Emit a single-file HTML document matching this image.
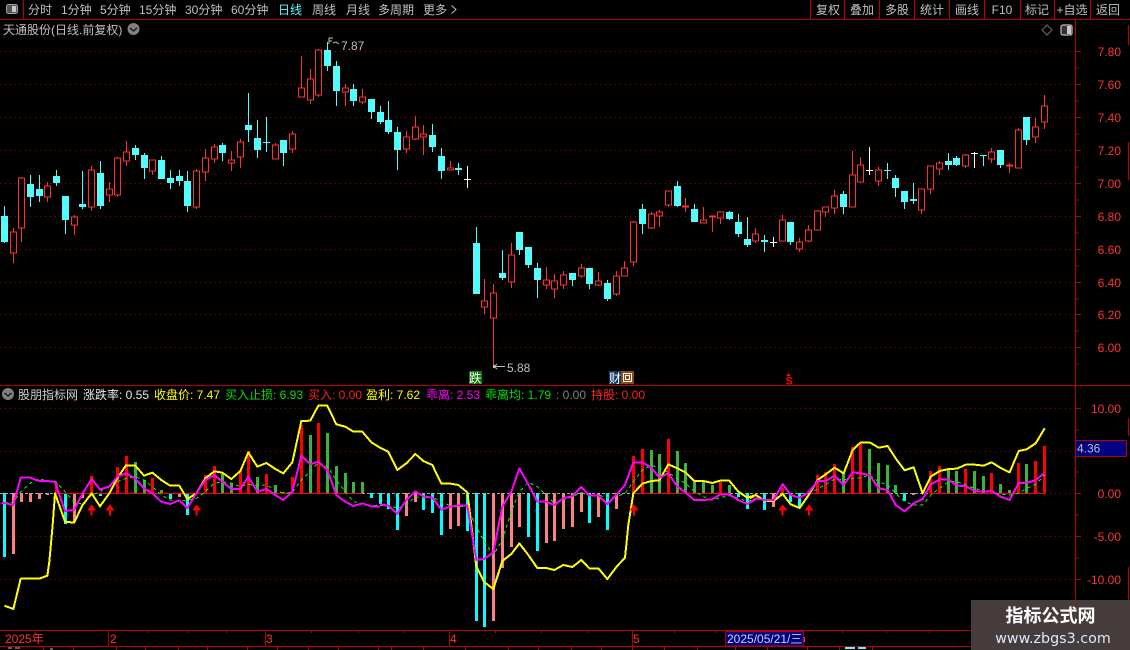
<!DOCTYPE html>
<html lang="zh">
<head>
<meta charset="utf-8">
<title>天通股份</title>
<style>
html,body{margin:0;padding:0;background:#000;width:1130px;height:650px;overflow:hidden}
svg{position:absolute;left:0;top:0;display:block}
text{font-family:"Liberation Sans","Noto Sans CJK SC",sans-serif;font-size:12px}
.t{fill:#c0c0c0}
.a{fill:#ff3232}
</style>
</head>
<body>
<svg width="1130" height="650" viewBox="0 0 1130 650" xmlns="http://www.w3.org/2000/svg">
<rect width="1130" height="650" fill="#000"/>

<!-- grid -->
<path shape-rendering="crispEdges" stroke="#a00000" stroke-dasharray="1 4" fill="none" d="M0 51.5H1075M0 84.5H1075M0 117.5H1075M0 150.5H1075M0 183.5H1075M0 216.5H1075M0 249.5H1075M0 282.5H1075M0 314.5H1075M0 347.5H1075M0 408.5H1075M0 451.5H1075M0 536.5H1075M0 579.5H1075M1045 493.5H1075"/>

<!-- frame -->
<path shape-rendering="crispEdges" stroke="#b80000" fill="none" d="M0 19.5H1130M23.5 0V19M810.5 0V19M844.5 0V19M879.5 0V19M914.5 0V19M949.5 0V19M984.5 0V19M1020.5 0V19M1054.5 0V19M1090.5 0V19M0 385.5H1130M0 630.5H971M0 646.5H971M1075.5 19V600M1128.5 25V45M1128.5 142V180M1128.5 418V436M1128.5 567V600
M1076 51.5H1081M1076 84.5H1081M1076 117.5H1081M1076 150.5H1081M1076 183.5H1081M1076 216.5H1081M1076 249.5H1081M1076 282.5H1081M1076 314.5H1081M1076 347.5H1081M1076 68H1079M1076 101H1079M1076 134H1079M1076 167H1079M1076 200H1079M1076 233H1079M1076 266H1079M1076 299H1079M1076 331H1079M1076 364H1079
M1076 408.5H1081M1076 451.5H1081M1076 493.5H1081M1076 536.5H1081M1076 579.5H1081M1076 430H1079M1076 472H1079M1076 515H1079M1076 558H1079
M108.5 630V646M265.5 630V646M449.5 630V646M632.5 630V646
M147.5 630V633M187.5 630V633M226.5 630V633M311.5 630V633M358.5 630V633M403.5 630V633M495.5 630V633M541.5 630V633M587.5 630V633M674.5 630V633M715.5 630V633M842.5 630V633M886.5 630V633M929.5 630V633
M43.5 646V650M73.5 646V650M116.5 646V650M145.5 646V650M178.5 646V650M207.5 646V650M247.5 646V650M277.5 646V650M308.5 646V650M338.5 646V650M378.5 646V650M391.5 646V650M423.5 646V650M465.5 646V650M508.5 646V650M538.5 646V650M571.5 646V650M601.5 646V650M632.5 646V650M664.5 646V650M697.5 646V650M735.5 646V650M767.5 646V650M807.5 646V650M839.5 646V650M872.5 646V650"/>

<!-- toolbar -->
<rect x="6.5" y="4.5" width="11" height="9" rx="2" fill="#555" stroke="#a0a0a0"/>
<rect x="12" y="6" width="4" height="6" fill="#c8c8c8"/>
<text class="t" x="28" y="14">分时</text>
<text class="t" x="61" y="14">1分钟</text>
<text class="t" x="100" y="14">5分钟</text>
<text class="t" x="139" y="14">15分钟</text>
<text class="t" x="185" y="14">30分钟</text>
<text class="t" x="231" y="14">60分钟</text>
<text x="278" y="14" fill="#54fcfc">日线</text>
<text class="t" x="312" y="14">周线</text>
<text class="t" x="346" y="14">月线</text>
<text class="t" x="378" y="14">多周期</text>
<text class="t" x="423" y="14">更多</text>
<path d="M451.5 5.5L456 9.5L451.5 13.5" fill="none" stroke="#c0c0c0"/>
<g text-anchor="middle">
<text class="t" x="828" y="14">复权</text>
<text class="t" x="862" y="14">叠加</text>
<text class="t" x="897" y="14">多股</text>
<text class="t" x="932" y="14">统计</text>
<text class="t" x="967" y="14">画线</text>
<text class="t" x="1002" y="14">F10</text>
<text class="t" x="1037" y="14">标记</text>
<text class="t" x="1072" y="14">+自选</text>
<text class="t" x="1108" y="14">返回</text>
</g>

<!-- title -->
<text class="t" x="3" y="34">天通股份(日线.前复权)</text>
<circle cx="133.500" cy="29" r="6" fill="#808080"/>
<path d="M130 28L133.500 31L137 28" fill="none" stroke="#222" stroke-width="1.500"/>
<path d="M1047 25L1052 30L1047 35L1042 30Z" fill="none" stroke="#707070"/>
<rect x="1061" y="25" width="11" height="10" rx="2" fill="#333" stroke="#a0a0a0" stroke-width="1.500"/>
<rect x="1067" y="26" width="4" height="8" fill="#c8c8c8"/>

<!-- candle wicks/body -->
<g shape-rendering="crispEdges">
<path fill="none" stroke="#ff3232" d="M10.5 232h6v21h-6zM13.5 228V232M13.5 253V263M18.5 178h6v50h-6zM21.5 177V178M21.5 228V242M44.5 186h6v11h-6zM47.5 182V186M47.5 197V202M71.5 217h6v8h-6zM74.5 215V217M74.5 225V235M88.5 170h6v37h-6zM91.5 166V170M91.5 207V211M106.5 189h6v6h-6zM109.5 182V189M109.5 195V202M114.5 158h6v37h-6zM117.5 157V158M117.5 195V197M123.5 152h6v9h-6zM126.5 141V152M126.5 161V166M149.5 160h6v11h-6zM152.5 171V175M193.5 171h6v36h-6zM196.5 169V171M196.5 207V209M202.5 158h6v14h-6zM205.5 149V158M205.5 172V181M211.5 147h6v12h-6zM214.5 144V147M214.5 159V163M228.5 160h6v3h-6zM231.5 151V160M231.5 163V171M237.5 142h6v15h-6zM240.5 139V142M240.5 157V168M272.5 145h6v14h-6zM275.5 143V145M289.5 134h6v15h-6zM292.5 131V134M292.5 149V153M298.5 88h6v9h-6zM301.5 56V88M307.5 79h6v21h-6zM310.5 69V79M310.5 100V104M315.5 50h6v45h-6zM318.5 49V50M318.5 95V97M342.5 88h6v4h-6zM345.5 84V88M345.5 92V106M359.5 97h6v5h-6zM362.5 89V97M362.5 102V104M403.5 137h6v12h-6zM406.5 131V137M406.5 149V153M412.5 127h6v12h-6zM415.5 116V127M415.5 139V140M420.5 134h6v3h-6zM423.5 125V134M423.5 137V155M447.5 168h6v2h-6zM450.5 161V168M481.5 301h6v6h-6zM484.5 279V301M484.5 307V314M490.5 293h6v25h-6zM493.5 284V293M493.5 318V366M508.5 255h6v27h-6zM511.5 243V255M511.5 282V288M543.5 280h6v5h-6zM546.5 267V280M546.5 285V289M551.5 281h6v8h-6zM554.5 274V281M554.5 289V298M560.5 275h6v10h-6zM563.5 271V275M563.5 285V289M578.5 268h6v8h-6zM581.5 264V268M581.5 276V278M595.5 281h6v4h-6zM598.5 272V281M598.5 285V286M613.5 276h6v18h-6zM616.5 271V276M616.5 294V296M621.5 268h6v8h-6zM624.5 261V268M630.5 222h6v40h-6zM633.5 221V222M633.5 262V266M648.5 214h6v14h-6zM651.5 212V214M651.5 228V229M656.5 212h6v4h-6zM659.5 210V212M659.5 216V227M665.5 191h6v14h-6zM668.5 205V207M682.5 206h6v1h-6zM685.5 198V206M685.5 207V212M700.5 220h6v3h-6zM703.5 207V220M709.5 216h6v1h-6zM712.5 217V232M717.5 212h6v6h-6zM720.5 218V224M752.5 234h6v7h-6zM755.5 228V234M755.5 241V243M779.5 220h6v21h-6zM782.5 215V220M796.5 242h6v7h-6zM799.5 238V242M799.5 249V252M805.5 230h6v11h-6zM808.5 225V230M808.5 241V242M814.5 211h6v19h-6zM817.5 210V211M822.5 207h6v5h-6zM825.5 212V217M831.5 196h6v12h-6zM834.5 190V196M834.5 208V214M849.5 175h6v32h-6zM852.5 151V175M857.5 165h6v17h-6zM860.5 157V165M875.5 170h6v11h-6zM878.5 167V170M878.5 181V186M918.5 189h6v21h-6zM921.5 210V214M927.5 166h6v23h-6zM930.5 189V194M936.5 163h6v6h-6zM939.5 161V163M939.5 169V175M962.5 155h6v11h-6zM965.5 154V155M965.5 166V168M988.5 152h6v7h-6zM991.5 148V152M991.5 159V163M1006.5 165h6v1h-6zM1009.5 163V165M1009.5 166V173M1015.5 130h6v38h-6zM1018.5 128V130M1032.5 127h6v10h-6zM1035.5 118V127M1035.5 137V143M1041.5 106h6v16h-6zM1044.5 95V106M1044.5 122V129"/>
<path fill="none" stroke="#54fcfc" d="M4.5 206V243M30.5 175V207M39.5 175V202M56.5 170V186M65.5 196V234M82.5 171V209M100.5 161V209M135.5 145V160M144.5 153V179M161.5 156V179M170.5 170V189M179.5 170V186M187.5 171V212M222.5 143V161M248.5 93V142M257.5 120V158M266.5 117V152M283.5 140V166M327.5 42V71M336.5 61V106M353.5 84V106M371.5 99V119M380.5 106V124M388.5 101V134M397.5 127V170M432.5 124V152M441.5 148V179M458.5 163V175M476.5 227V294M502.5 250V280M519.5 232V255M528.5 247V268M537.5 263V298M572.5 273V286M589.5 268V289M607.5 280V301M642.5 204V234M677.5 181V207M694.5 204V222M729.5 211V220M738.5 214V237M747.5 217V247M764.5 235V252M790.5 222V245M843.5 191V214M887.5 163V179M895.5 175V197M904.5 191V209M913.5 183V204M948.5 153V170M956.5 156V166M983.5 155V166M1000.5 150V168M1026.5 117V145"/>
<path fill="#54fcfc" d="M1 216h7v26h-7zM27 184h7v13h-7zM36 189h7v7h-7zM53 176h7v7h-7zM62 196h7v24h-7zM79 204h7v3h-7zM97 173h7v33h-7zM132 148h7v7h-7zM141 155h7v13h-7zM158 160h7v19h-7zM167 178h7v5h-7zM176 176h7v5h-7zM184 181h7v25h-7zM219 145h7v8h-7zM245 125h7v5h-7zM254 138h7v12h-7zM263 142h7v1h-7zM280 140h7v13h-7zM324 50h7v16h-7zM333 66h7v25h-7zM350 89h7v12h-7zM368 99h7v13h-7zM377 112h7v10h-7zM385 120h7v12h-7zM394 132h7v18h-7zM429 135h7v12h-7zM438 156h7v15h-7zM455 168h7v2h-7zM473 243h7v51h-7zM499 273h7v5h-7zM516 232h7v18h-7zM525 247h7v18h-7zM534 268h7v12h-7zM569 273h7v7h-7zM586 268h7v16h-7zM604 283h7v16h-7zM639 209h7v15h-7zM674 186h7v20h-7zM691 209h7v13h-7zM726 212h7v7h-7zM735 222h7v12h-7zM744 239h7v6h-7zM761 240h7v2h-7zM787 222h7v20h-7zM840 194h7v13h-7zM884 170h7v1h-7zM892 178h7v10h-7zM901 191h7v11h-7zM910 199h7v2h-7zM945 161h7v4h-7zM953 158h7v7h-7zM980 155h7v1h-7zM997 150h7v15h-7zM1023 117h7v23h-7z"/>
<path fill="none" stroke="#ffffff" d="M467.5 166V188M464 179.500H471M773.5 237V247M770 242.500H777M869.5 147V175M866 170.500H873M974.5 152V168M971 153.500H978"/>
</g>

<!-- high / low tags -->
<path d="M329 37.500V44M329 38H333M329 41H332M333 43L336 42L339 44" fill="none" stroke="#c0c0c0"/>
<text class="t" x="341" y="50">7.87</text>
<path d="M494 366.500H505M497 364L494 366.500L497 369" fill="none" stroke="#c0c0c0"/>
<rect x="493" y="365" width="2" height="3" fill="#c0c0c0"/>
<text class="t" x="507" y="372">5.88</text>
<rect x="469" y="371" width="13" height="13" fill="#0a7a0a"/>
<text x="469" y="382.500" fill="#fff" style="font-size:12.500px">跌</text>
<rect x="609" y="371" width="12" height="13" fill="#0e3a66"/>
<text x="609" y="382.500" fill="#fff" style="font-size:12px">财</text>
<rect x="621" y="371" width="13" height="13" fill="#8a4a12"/>
<path d="M623.500 373.500h8v8h-8zM625.500 375.500h4v4h-4z" fill="none" stroke="#fff" shape-rendering="crispEdges"/>
<path d="M786 376L788.500 373L791 376Z" fill="#ff0000"/>
<text x="785.500" y="384.500" fill="#ff0000" style="font-size:11px;font-weight:bold">S</text>

<!-- upper axis labels -->
<g class="a" text-anchor="end">
<text class="a" x="1121" y="56">7.80</text>
<text class="a" x="1121" y="89">7.60</text>
<text class="a" x="1121" y="122">7.40</text>
<text class="a" x="1121" y="155">7.20</text>
<text class="a" x="1121" y="188">7.00</text>
<text class="a" x="1121" y="221">6.80</text>
<text class="a" x="1121" y="254">6.60</text>
<text class="a" x="1121" y="287">6.40</text>
<text class="a" x="1121" y="319">6.20</text>
<text class="a" x="1121" y="352">6.00</text>
<text class="a" x="1121" y="413">10.00</text>
<text class="a" x="1121" y="498">0.00</text>
<text class="a" x="1121" y="541">-5.00</text>
<text class="a" x="1121" y="584">-10.00</text>
</g>
<rect x="1076" y="440" width="51" height="16" fill="#000080"/>
<path d="M1076 440.500H1127M1076 456.500H1127M1126.500 440V456" stroke="#b80000" fill="none" shape-rendering="crispEdges"/>
<text x="1077" y="452.500" fill="#c0c0c0">4.36</text>

<!-- indicator title -->
<circle cx="8" cy="394" r="6" fill="#808080"/>
<path d="M4.500 393L8 396L11.500 393" fill="none" stroke="#222" stroke-width="1.500"/>
<text x="18" y="399" fill="#d0d0d0">股朋指标网</text>
<text x="83" y="399" fill="#e8e8e8">涨跌率: 0.55</text>
<text x="154" y="399" fill="#ffff00">收盘价: 7.47</text>
<text x="225" y="399" fill="#00e000">买入止损: 6.93</text>
<text x="308" y="399" fill="#ff2020">买入: 0.00</text>
<text x="366" y="399" fill="#ffff00">盈利: 7.62</text>
<text x="426" y="399" fill="#ff00ff">乖离: 2.53</text>
<text x="485" y="399" fill="#00e000">乖离均: 1.79</text>
<text x="556" y="399" fill="#808080">: 0.00</text>
<text x="591" y="399" fill="#ff2020">持股: 0.00</text>

<!-- bars -->
<g shape-rendering="crispEdges" stroke-width="3" fill="none">
<path stroke="#00ffff" d="M4.500 493V557M65.500 493V524M100.500 493V496M170.500 493V499M187.500 493V515M371.500 493V498M380.500 493V504M388.500 493V509M397.500 493V530M423.500 493V510M432.500 493V513M441.500 493V535M467.500 493V531M476.500 493V621M484.500 493V627M528.500 493V537M537.500 493V551M589.500 493V523M607.500 493V530M738.500 493V497M747.500 493V509M764.500 493V510M790.500 493V502M799.500 493V507M904.500 493V501"/>
<path stroke="#ff8080" d="M13.500 493V554M21.500 493V502M30.500 493V502M39.500 493V499M47.500 493V495M74.500 493V522M82.500 493V498M179.500 493V497M406.500 493V516M415.500 493V502M450.500 493V529M458.500 493V526M493.500 493V621M502.500 493V568M511.500 493V547M519.500 493V527M546.500 493V543M554.500 493V541M563.500 493V529M572.500 493V527M581.500 493V512M598.500 493V517M616.500 493V509M773.500 493V507M913.500 493V495"/>
<path stroke="#ff0000" d="M56.500 493V483M91.500 493V476M117.500 493V467M126.500 493V456M152.500 493V478M205.500 493V475M214.500 493V466M240.500 493V470M248.500 493V451M266.500 493V474M292.500 493V477M301.500 493V425M318.500 493V423M633.500 493V456M642.500 493V449M668.500 493V439M720.500 493V482M782.500 493V488M817.500 493V475M825.500 493V472M834.500 493V464M852.500 493V447M860.500 493V444M930.500 493V471M939.500 493V466M965.500 493V469M991.500 493V473M1018.500 493V463M1035.500 493V461M1044.500 493V446"/>
<path stroke="#3cb33c" d="M135.500 493V462M144.500 493V480M161.500 493V490M222.500 493V474M231.500 493V483M257.500 493V477M275.500 493V485M283.500 493V492M310.500 493V435M327.500 493V433M336.500 493V466M345.500 493V473M353.500 493V482M362.500 493V482M651.500 493V450M659.500 493V454M677.500 493V451M685.500 493V463M694.500 493V482M703.500 493V482M712.500 493V485M729.500 493V485M843.500 493V473M869.500 493V449M878.500 493V463M887.500 493V465M895.500 493V485M948.500 493V469M956.500 493V471M974.500 493V471M983.500 493V476M1000.500 493V484M1009.500 493V490M1026.500 493V464"/>
</g>
<path shape-rendering="crispEdges" fill="none" stroke="#a8a8a8" stroke-dasharray="3 2" d="M0 493.500H55M362 493.500H633M730 493.500H808M890 493.500H930"/>
<path shape-rendering="crispEdges" fill="none" stroke="#ff0000" d="M55 493.500H362M633 493.500H730M808 493.500H890M930 493.500H1045"/>

<!-- lines -->
<g transform="translate(0 385) scale(.33333)" fill="none" stroke-linejoin="round" shape-rendering="crispEdges">
<polyline stroke="#00ff00" stroke-width="3" stroke-dasharray="10 10" points="13,353 40,352 62,320 90,295 118,282 142,288 165,288 195,320 222,350 248,358 275,330 300,320 328,300 352,290 378,280 405,275 432,285 457,305 484,330 510,345 538,350 562,345 589,340 616,320 643,295 667,290 694,295 721,305 745,298 772,302 799,300 826,315 850,325 877,322 904,285 931,258 955,232 982,245 1009,285 1036,320 1060,350 1087,355 1114,362 1140,360"/>
<polyline stroke="#ffff00" stroke-width="6" points="13,662 40,672 62,581 118,581 142,572 148,530 158,420 165,325 195,410 222,413 248,360 275,325 300,364 328,325 352,280 378,241 405,241 432,272 457,263 484,285 510,302 538,302 562,342 589,325 616,280 643,259 667,263 694,282 721,258 745,202 772,245 799,234 826,252 850,265 877,232 904,108 931,107 955,62 982,62 1009,118 1036,125 1060,140 1087,140 1114,172 1140,188"/>
<polyline stroke="#ff00ff" stroke-width="6" points="4,354 13,354 40,360 62,278 90,278 118,288 142,288 165,291 195,378 222,375 248,325 275,282 300,313 328,305 352,275 378,265 405,280 432,310 457,325 484,350 510,357 538,346 562,369 589,325 616,285 643,270 667,290 694,312 721,312 745,275 772,320 799,312 826,330 850,345 877,320 904,212 931,238 955,230 982,255 1009,330 1036,350 1060,363 1087,355 1114,364 1140,364"/>
<path fill="#ff0000" stroke="none" d="M275 358L289 377H278V392H272V377H261ZM330 358L344 377H333V392H327V377H316ZM590 358L604 377H593V392H587V377H576Z"/>
</g>
<g transform="translate(380 385) scale(.33333)" fill="none" stroke-linejoin="round" shape-rendering="crispEdges">
<polyline stroke="#00ff00" stroke-width="3" stroke-dasharray="10 10" points="0,362 25,360 52,370 79,360 106,335 130,340 157,335 184,352 211,362 235,365 262,365 289,425 313,470 340,510 367,465 394,380 418,320 445,292 472,305 499,330 523,355 550,345 577,335 604,322 628,332 655,330 682,338 709,335 735,325 760,290 787,255 814,240 838,250 865,262 892,282 916,295 943,318 970,335 997,345 1021,338 1048,332 1075,340 1102,348 1128,345"/>
<polyline stroke="#ffff00" stroke-width="6" points="0,188 25,200 52,255 79,235 106,207 130,228 157,240 184,296 211,296 235,300 262,322 265,345 289,545 313,592 340,612 367,528 394,507 418,475 445,510 472,549 499,549 523,555 550,540 577,546 604,525 628,550 655,550 682,582 709,546 735,518 745,420 760,325 787,296 814,288 838,286 865,238 892,250 916,262 943,288 970,288 997,294 1021,287 1048,287 1075,320 1102,338 1128,330"/>
<polyline stroke="#ff00ff" stroke-width="6" points="0,358 25,362 52,386 79,345 106,319 130,334 157,338 184,374 211,365 235,362 262,362 289,525 313,522 340,502 367,365 394,320 418,250 445,298 472,350 499,350 523,360 550,340 577,333 604,306 628,332 655,332 682,357 709,330 735,300 760,232 787,232 814,248 838,278 865,265 892,305 916,322 943,345 970,345 997,343 1021,328 1048,328 1075,345 1102,357 1128,342"/>
<path fill="#ff0000" stroke="none" d="M762 358L776 377H765V392H759V377H748Z"/>
</g>
<g transform="translate(750 385) scale(.33333)" fill="none" stroke-linejoin="round" shape-rendering="crispEdges">
<polyline stroke="#00ff00" stroke-width="3" stroke-dasharray="10 10" points="0,350 17,342 44,345 71,342 98,328 122,325 149,325 176,325 203,312 227,298 254,282 281,285 308,280 332,278 359,270 386,290 413,300 437,325 464,350 491,360 518,360 542,330 569,310 596,290 620,290 647,300 674,310 701,318 725,320 752,328 779,330 806,325 830,310 857,298 884,270"/>
<polyline stroke="#ffff00" stroke-width="6" points="0,340 17,330 44,347 71,348 98,327 122,358 149,369 176,330 203,285 227,268 254,248 281,265 308,195 332,172 359,172 386,188 413,183 437,220 464,256 491,247 518,325 542,275 569,258 596,252 620,251 647,239 674,239 701,242 725,232 752,249 779,262 806,198 830,193 857,175 884,130"/>
<polyline stroke="#ff00ff" stroke-width="6" points="0,353 17,340 44,345 71,345 98,297 122,330 149,338 176,322 203,288 227,288 254,272 281,300 308,262 332,265 359,270 386,310 413,315 437,360 464,379 491,355 518,342 542,298 569,284 596,284 620,302 647,303 674,318 701,320 725,318 752,335 779,345 806,294 830,293 857,286 884,263"/>
<path fill="#ff0000" stroke="none" d="M98 358L112 377H101V392H95V377H84ZM177 358L191 377H180V392H174V377H163Z"/>
</g>

<!-- time axis -->
<text class="a" x="5" y="643">2025年</text>
<text class="a" x="110" y="643">2</text>
<text class="a" x="266" y="643">3</text>
<text class="a" x="450" y="643">4</text>
<text class="a" x="633" y="643">5</text>
<rect x="725.500" y="631.500" width="78" height="14.500" fill="#000080" stroke="#b80000" shape-rendering="crispEdges"/>
<text x="727" y="643" fill="#d0d0f0">2025/05/21/三</text>
<rect x="804" y="637" width="1" height="5" fill="#ff3232"/>

<!-- status row hints -->
<path d="M8 648H12M15 648H20M50 649H53" stroke="#c0c0c0" fill="none" shape-rendering="crispEdges"/>
<path d="M845 648H855M858 648H866" stroke="#54fcfc" stroke-width="2" fill="none" shape-rendering="crispEdges"/>

<!-- watermark -->
<rect x="971" y="600" width="159" height="50" fill="#463c3c"/>
<text x="1050.500" y="622" text-anchor="middle" fill="#fff" style="font-size:18px;font-weight:bold">指标公式网</text>
<text x="1053" y="643" text-anchor="middle" fill="#dbe9ff" style="font-family:'DejaVu Sans',sans-serif;font-size:14.300px">www.zbgs3.com</text>
</svg>
</body>
</html>
